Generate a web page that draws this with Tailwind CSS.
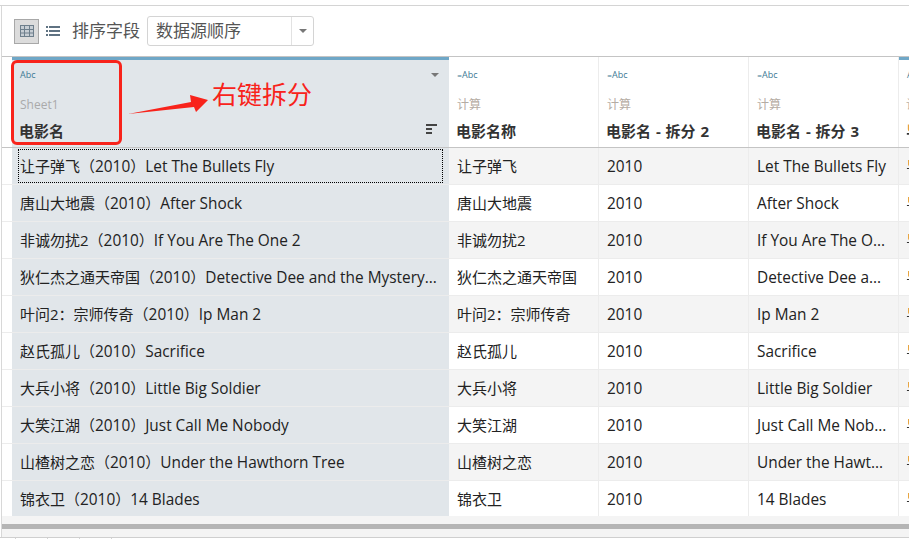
<!DOCTYPE html>
<html lang="en">
<head>
  <meta charset="UTF-8" />
  <title>Data Source</title>
  <script src="https://cdn.jsdelivr.net/npm/@tailwindcss/browser@4"></script>
</head>
<body class="w-[909px] h-[539px] overflow-hidden bg-white text-[#333] font-['Open_Sans','Noto_Sans_CJK_SC',sans-serif]">
  <div class="relative w-[909px] h-[539px] pt-[5px] overflow-hidden">
    <div class="h-px bg-[#d4d4d4]"></div>
    <div class="ml-px border-l border-[#d8d8d8] h-[531px] flex flex-col">

      <!-- toolbar -->
      <div class="h-[50px] flex items-center pl-[12px] shrink-0">
        <div class="w-[25px] h-[25px] bg-[#dcdcdc] border border-[#a8a8a8] flex items-center justify-center">
          <svg width="14" height="12" viewBox="0 0 14 12" fill="none" stroke="#6e7f8c" stroke-width="1"><rect x="0.5" y="0.5" width="13" height="11" fill="#c7ced4"/><path d="M0 4.5H14M0 8H14M4.5 0V12M9.5 0V12"/></svg>
        </div>
        <div class="w-[28px] flex justify-center">
          <svg width="14" height="12" viewBox="0 0 14 12" fill="#5f7282"><rect x="0" y="1" width="2" height="2"/><rect x="3" y="1" width="11" height="2"/><rect x="0" y="5" width="2" height="2"/><rect x="3" y="5" width="11" height="2"/><rect x="0" y="9" width="2" height="2"/><rect x="3" y="9" width="11" height="2"/></svg>
        </div>
        <span class="text-[17px] text-[#555] ml-[5px] w-[75px]">排序字段</span>
        <div class="w-[167px] h-[30px] border border-[#d4d4d4] rounded-[3px] flex items-center">
          <span class="flex-1 pl-[8px] text-[17px] text-[#555]">数据源顺序</span>
          <div class="w-[22px] h-full border-l border-[#e2e2e2] flex items-center justify-center">
            <div class="w-0 h-0 border-x-[4px] border-x-transparent border-t-[4px] border-t-[#777]"></div>
          </div>
        </div>
      </div>

      <div class="h-px bg-[#c4c4c4] shrink-0"></div>

      <!-- table -->
      <div class="flex-1 flex flex-col overflow-hidden bg-[#f4f4f4]">
        <div class="flex h-[91px] border-b border-[#c4c4c4] pl-[10px] bg-white shrink-0">
          <div class="relative w-[437px] shrink-0 bg-[#e1e6ea] border-t-[3px] border-t-[#6fa7c7] pl-[8px]">
            <div class="text-[9px] leading-[12px] text-[#3d7a94] mt-[9px] h-[12px]">Abc</div>
            <div class="text-[12px] leading-[16px] text-[#aaa] mt-[16px]">Sheet1</div>
            <div class="text-[15px] leading-[20px] font-bold mt-[8px] -ml-px">电影名</div>
            <div class="absolute right-[10px] top-[13px] w-0 h-0 border-x-[4px] border-x-transparent border-t-[4px] border-t-[#777]"></div>
            <svg class="absolute right-[12px] top-[64px]" width="11" height="10" viewBox="0 0 11 10" fill="#444"><rect width="11" height="2"/><rect y="4" width="6" height="2"/><rect y="8" width="6" height="2"/></svg>
          </div>
          <div class="w-[150px] shrink-0 border-r border-[#ececec] pl-[8px] pt-[3px]">
            <div class="text-[9px] leading-[12px] text-[#3d7a94] mt-[9px] h-[12px]"><span class="text-[6px] font-['DejaVu_Sans']">=</span>Abc</div>
            <div class="text-[12px] leading-[16px] text-[#b5aca3] mt-[16px]">计算</div>
            <div class="text-[15px] leading-[20px] font-bold mt-[8px] -ml-px">电影名称</div>
          </div>
          <div class="w-[150px] shrink-0 border-r border-[#ececec] pl-[8px] pt-[3px]">
            <div class="text-[9px] leading-[12px] text-[#3d7a94] mt-[9px] h-[12px]"><span class="text-[6px] font-['DejaVu_Sans']">=</span>Abc</div>
            <div class="text-[12px] leading-[16px] text-[#b5aca3] mt-[16px]">计算</div>
            <div class="text-[15px] leading-[20px] font-bold mt-[8px] -ml-px [word-spacing:1px]">电影名 - 拆分 2</div>
          </div>
          <div class="w-[150px] shrink-0 border-r border-[#ececec] pl-[8px] pt-[3px]">
            <div class="text-[9px] leading-[12px] text-[#3d7a94] mt-[9px] h-[12px]"><span class="text-[6px] font-['DejaVu_Sans']">=</span>Abc</div>
            <div class="text-[12px] leading-[16px] text-[#b5aca3] mt-[16px]">计算</div>
            <div class="text-[15px] leading-[20px] font-bold mt-[8px] -ml-px [word-spacing:1px]">电影名 - 拆分 3</div>
          </div>
          <div class="flex-1 min-w-0 border-t-[3px] border-t-[#6fa7c7] pl-[7px] whitespace-nowrap">
            <div class="text-[9px] leading-[12px] text-[#3d7a94] mt-[9px] h-[12px] pl-px">Abc</div>
            <div class="text-[12px] leading-[16px] text-[#b5aca3] mt-[16px]">计算</div>
            <div class="text-[15px] leading-[20px] font-bold mt-[8px] bg-linear-to-b from-[#e8a33d] from-50% to-[#333] to-50% bg-clip-text text-transparent">导演</div>
          </div>
        </div>

        <div id="rows" class="flex flex-col h-[368px] text-[15px] leading-[36px] text-[#222] shrink-0"></div>

        <!-- horizontal scrollbar -->
        <div class="h-[5px] bg-[#b5b5b5] mt-[8px] shrink-0"></div>
      </div>
    </div>

    <!-- bottom strip -->
    <div class="h-px bg-[#cfcfcf]"></div>
    <div class="h-px flex">
      <div class="w-[16px] border-r border-[#d4d4d4]"></div>
      <div class="w-[32px] border-r border-[#d4d4d4]"></div>
      <div class="w-[32px] border-r border-[#d4d4d4]"></div>
      <div class="w-[32px] border-r border-[#d4d4d4]"></div>
    </div>

    <!-- annotation drawn over the screenshot -->
    <div class="absolute left-[11px] top-[60px] w-[111px] h-[85px] border-[3.5px] border-[#f8231b] rounded-[6px]"></div>
    <svg class="absolute left-[126px] top-[92px]" width="84" height="26" viewBox="0 0 84 26" fill="#f8231b"><path d="M2 22 L65 10 L64 3 L82 8 L70 20 L68 15 Z"/></svg>
    <div class="absolute left-[212px] top-[76px] text-[25px] leading-[36px] text-[#f8231b]">右键拆分</div>
  </div>

  <script>
    // third value: what the narrow column shows when the name doesn't fit
    const movies = [
      ["让子弹飞", "Let The Bullets Fly"],
      ["唐山大地震", "After Shock"],
      ["非诚勿扰2", "If You Are The One 2", "If You Are The O..."],
      ["狄仁杰之通天帝国", "Detective Dee and the Mystery...", "Detective Dee a..."],
      ["叶问2：宗师传奇", "Ip Man 2"],
      ["赵氏孤儿", "Sacrifice"],
      ["大兵小将", "Little Big Soldier"],
      ["大笑江湖", "Just Call Me Nobody", "Just Call Me Nob..."],
      ["山楂树之恋", "Under the Hawthorn Tree", "Under the Hawt..."],
      ["锦衣卫", "14 Blades"],
    ];

    const rows = document.getElementById("rows");
    movies.forEach((m, i) => {
      const stripe = i % 2 === 0 ? "bg-[#f4f4f4]" : "bg-white";
      const focus = i === 0 ? '<div class="absolute left-[6px] right-[6px] top-px bottom-px border border-dotted border-black"></div>' : "";
      const row = document.createElement("div");
      row.className = "flex h-[37px] pl-[10px] border-b border-[#ececec] bg-white last:h-[35px] last:border-b-0";
      row.innerHTML = `
        <div class="relative w-[437px] shrink-0 bg-[#e1e6ea] pl-[8px] whitespace-nowrap overflow-hidden">${m[0]}（<span class="text-[15.4px]">2010</span>）<span class="text-[15.4px]">${m[1]}</span>${focus}</div>
        <div class="flex flex-1 min-w-0 ${stripe}">
          <div class="w-[150px] shrink-0 border-r border-[#ececec] pl-[8px] whitespace-nowrap">${m[0]}</div>
          <div class="w-[150px] shrink-0 border-r border-[#ececec] pl-[8px] pt-px text-[15.4px]">2010</div>
          <div class="w-[150px] shrink-0 border-r border-[#ececec] pl-[8px] pt-px text-[15.4px] whitespace-nowrap overflow-hidden">${m[2] || m[1]}</div>
          <div class="flex-1 min-w-0 pl-[7px] whitespace-nowrap bg-linear-to-b from-[#e8a33d] from-55% to-[#333] to-55% bg-clip-text text-transparent">导演</div>
        </div>`;
      rows.appendChild(row);
    });
  </script>
</body>
</html>
